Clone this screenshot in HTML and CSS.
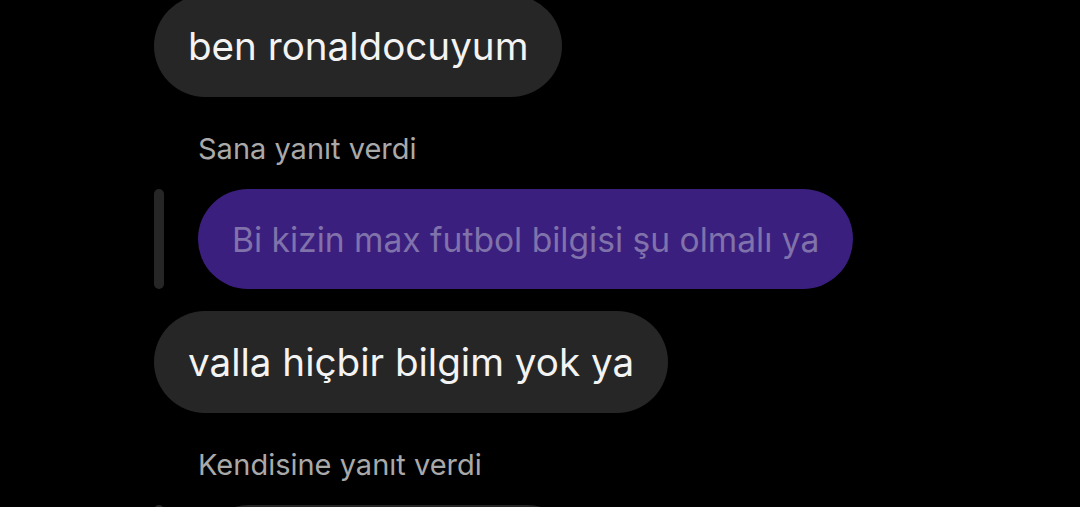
FILE: index.html
```html
<!DOCTYPE html>
<html lang="tr">
<head>
<meta charset="utf-8">
<link rel="stylesheet" href="styles.css">
</head>
<body>
<div class="thread">
  <div class="msg">
    <div class="bubble gray">ben ronaldocuyum</div>
  </div>
  <div class="reply-label">Sana yanıt verdi</div>
  <div class="quote">
    <div class="bar"></div>
    <div class="bubble purple">Bi kizin max futbol bilgisi şu olmalı ya</div>
  </div>
  <div class="msg msg-after-quote">
    <div class="bubble gray">valla hiçbir bilgim yok ya</div>
  </div>
  <div class="reply-label">Kendisine yanıt verdi</div>
  <div class="quote">
    <div class="bar"></div>
    <div class="bubble gray next"></div>
  </div>
</div>
</body>
</html>
```

FILE: styles.css
```css
html, body {
  margin: 0;
  padding: 0;
  background: #000;
  height: 100%;
  overflow: hidden;
}

.thread {
  display: flex;
  flex-direction: column;
  align-items: flex-start;
  margin-top: -5px;
  padding-left: 154px;
  font-family: Inter, Roboto, "Noto Sans", sans-serif;
}

.msg {
  display: flex;
}

.msg-after-quote {
  margin-top: 22px;
}

.bubble {
  display: flex;
  align-items: center;
  box-sizing: border-box;
  padding: 0 34px;
  border-radius: 52px;
  white-space: nowrap;
}

.gray {
  height: 102px;
  background: #262626;
  color: #f3f3f3;
  font-size: 38.6px;
}

.purple {
  height: 100px;
  background: #3b1f7e;
  color: #8072aa;
  font-size: 33.6px;
}

.reply-label {
  box-sizing: border-box;
  height: 92px;
  padding: 36px 0 0 44px;
  font-size: 29px;
  line-height: 32px;
  color: #a9a9a9;
}

.quote {
  display: flex;
  gap: 34px;
}

.bar {
  width: 10px;
  border-radius: 5px;
  background: #262626;
}

.next {
  width: 380px;
}
```
